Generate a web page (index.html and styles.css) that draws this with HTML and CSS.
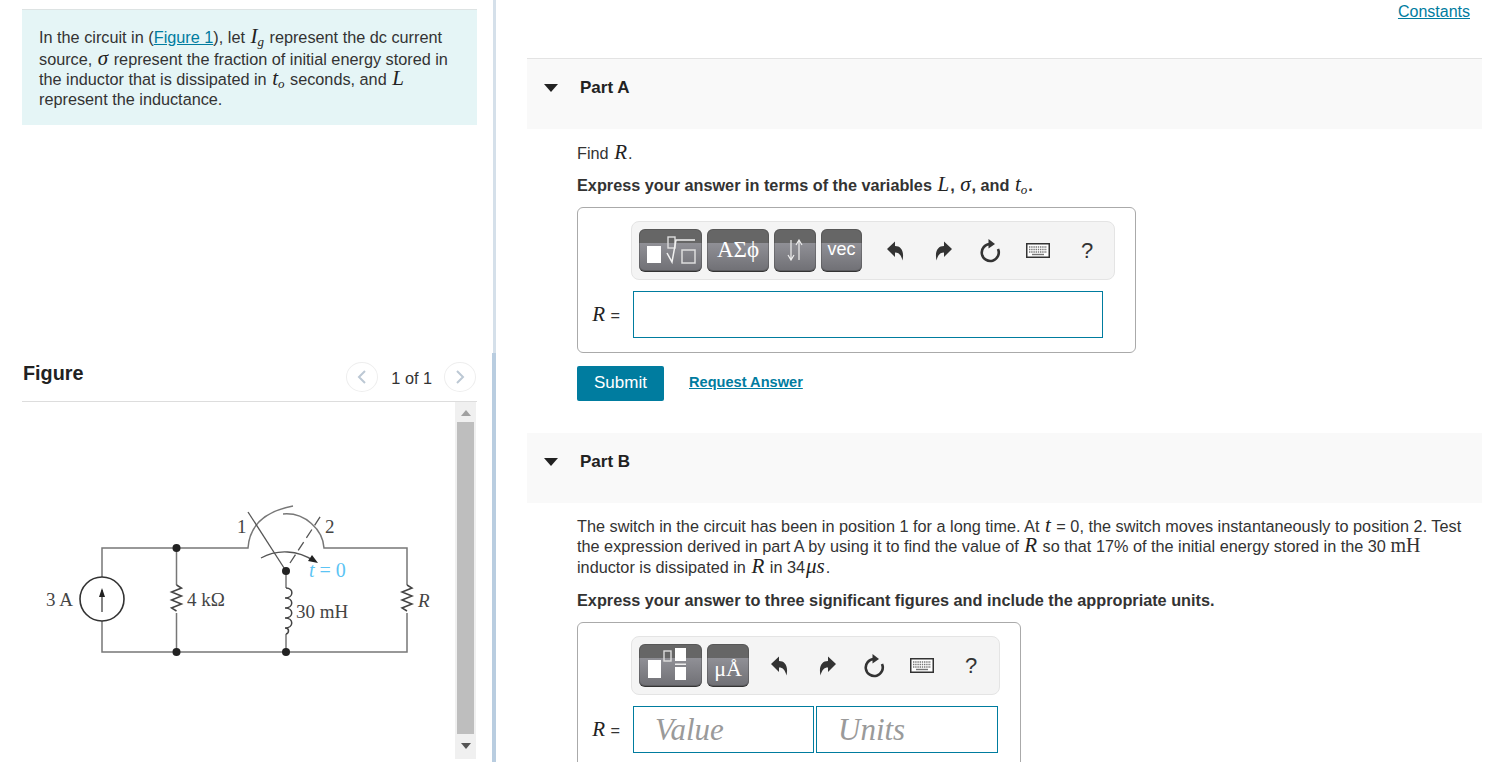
FILE: index.html
```html
<!DOCTYPE html>
<html lang="en">
<head>
    <meta charset="UTF-8">
    <title>Part A</title>
    <link rel="stylesheet" href="styles.css">
</head>
<body>
    <svg class="defs" width="0" height="0">
        <symbol id="i-undo" viewBox="0 0 17 20">
            <path d="M0 8 L8 0.5 V5 C14 5 17.500 10 15.500 19.500 C14 14 12 11.500 8 11.500 V16 Z"/>
        </symbol>
        <symbol id="i-reset" viewBox="0 0 22 24">
            <path d="M11 5 A8.500 8.500 0 1 0 19 10" fill="none" stroke="currentColor" stroke-width="2.600"/>
            <path d="M9.500 0 L16 5 L9.500 9.500 Z"/>
        </symbol>
        <symbol id="i-keys" viewBox="0 0 24 15">
            <rect x="0.750" y="0.750" width="22.500" height="13.500" fill="#fff" stroke="currentColor" stroke-width="1.500"/>
            <path d="M3 4 H21 M3 6.500 H21 M3 9 H21" stroke="#777" stroke-width="1.400" stroke-dasharray="1.400 0.800" fill="none"/>
            <path d="M6 11.500 H18" stroke="#777" stroke-width="1.400" fill="none"/>
        </symbol>
    </svg>

    <aside class="left">
        <div class="intro">
            <p>In the circuit in (<a href="#">Figure 1</a>), let <span class="m big">I<sub>g</sub></span> represent the dc current<br>
            source, <span class="m">σ</span> represent the fraction of initial energy stored in<br>
            the inductor that is dissipated in <span class="m">t<sub>o</sub></span> seconds, and <span class="m">L</span><br>
            represent the inductance.</p>
        </div>

        <div class="fig-head">
            <h3>Figure</h3>
            <div class="pager">
                <span class="circ"><svg width="10" height="16" viewBox="0 0 10 16"><path d="M8 2 L2 8 L8 14" fill="none" stroke="#bcc8d4" stroke-width="2"/></svg></span>
                <span class="count">1 of 1</span>
                <span class="circ"><svg width="10" height="16" viewBox="0 0 10 16"><path d="M2 2 L8 8 L2 14" fill="none" stroke="#bcc8d4" stroke-width="2"/></svg></span>
            </div>
        </div>

        <div class="fig-pane">
            <div class="fig-img">
                <svg class="circuit" width="433" height="358" viewBox="22 402 433 358">
                    <g fill="none" stroke="#777" stroke-width="1.500">
                        <path d="M102 577 V548 H248 C249 533 256 513 293 506"/>
                        <path d="M283 514 C305 512 323 530 324 548 H407 V585"/>
                        <path d="M407 613 V652 H102 V621"/>
                        <path d="M176.500 548 V585 M176.500 613 V652 M286 571 V588 M286 634 V652"/>
                    </g>
                    <g fill="none" stroke="#444" stroke-width="1.500">
                        <path d="M176.500 585 l5 3 l-10 4 l10 4 l-10 4 l10 4 l-10 4 l5 3"/>
                        <path d="M407 585 l5 3 l-10 4 l10 4 l-10 4 l10 4 l-10 4 l5 3"/>
                        <path d="M286 588 c8 0 8 10 -1 10 c9 0 9 10 0 10 c9 0 9 10 0 10 c9 0 9 10 0 10 c5 0 4 5 1 6"/>
                    </g>
                    <g fill="none" stroke="#555" stroke-width="1.300">
                        <path d="M248 512 L286 571"/>
                        <path d="M290 563 L322 514" stroke-dasharray="10 5"/>
                        <path d="M261 558 C277 549 298 550 314 561"/>
                    </g>
                    <circle cx="102" cy="599" r="22" fill="none" stroke="#333" stroke-width="1.600"/>
                    <path d="M102 612 V590" stroke="#333" stroke-width="1.200"/>
                    <path d="M102 588 L105 597 H99 Z" fill="#222"/>
                    <path d="M318 563 L308 561 L312 555 Z" fill="#222"/>
                    <circle cx="176.500" cy="548" r="4" fill="#222"/>
                    <circle cx="176.500" cy="652" r="4" fill="#222"/>
                    <circle cx="286" cy="571" r="4" fill="#222"/>
                    <circle cx="286" cy="652" r="4" fill="#222"/>
                    <g class="ct">
                        <text x="46" y="606">3 A</text>
                        <text x="187" y="606">4 kΩ</text>
                        <text x="237" y="533">1</text>
                        <text x="325" y="533">2</text>
                        <text x="296" y="618">30 mH</text>
                        <text x="418" y="607" font-style="italic">R</text>
                        <text class="t0" x="309" y="577"><tspan font-style="italic">t</tspan> = 0</text>
                    </g>
                </svg>
            </div>
            <div class="scroll">
                <span class="tri up"></span>
                <span class="thumb"></span>
                <span class="tri down"></span>
            </div>
        </div>
    </aside>

    <div class="divider">
        <span class="div-top"></span>
        <span class="div-bot"></span>
    </div>

    <main class="right">
        <div class="const"><a href="#">Constants</a></div>

        <section class="part">
            <div class="part-head"><span class="caret"></span><h4>Part A</h4></div>
            <div class="part-body">
                <p class="find">Find <span class="m">R</span>.</p>
                <p class="ask"><b>Express your answer in terms of the variables <span class="m">L</span>, <span class="m">σ</span>, and <span class="m">t<sub>o</sub></span>.</b></p>
                <div class="answer a-wide">
                    <div class="toolbar t-wide">
                        <div class="btns">
                            <span class="btn b-root">
                                <svg width="52" height="34" viewBox="0 0 52 34"><rect x="2" y="13" width="14" height="17" fill="#fff"/><rect x="23" y="4" width="7" height="11" fill="none" stroke="#ddd" stroke-width="1.400"/><path d="M22 20 L27 29 L31 7 H50" fill="none" stroke="#f0f0f0" stroke-width="1.500"/><rect x="37" y="17" width="13" height="13" fill="none" stroke="#ddd" stroke-width="1.500"/></svg>
                            </span>
                            <span class="btn b-greek">ΑΣϕ</span>
                            <span class="btn b-arrows">
                                <svg width="18" height="22" viewBox="0 0 18 22"><path d="M5 1 V20 M2 16 L5 21 L8 16 M13 21 V2 M10 6 L13 1 L16 6" fill="none" stroke="#eee" stroke-width="1.200"/></svg>
                            </span>
                            <span class="btn b-vec">vec</span>
                        </div>
                        <div class="tools">
                            <svg class="ti" width="17" height="20"><use href="#i-undo"/></svg>
                            <svg class="ti flip" width="17" height="20"><use href="#i-undo"/></svg>
                            <svg class="ti" width="22" height="24"><use href="#i-reset"/></svg>
                            <svg class="ti" width="24" height="15"><use href="#i-keys"/></svg>
                            <span class="help">?</span>
                        </div>
                    </div>
                    <div class="row">
                        <span class="lab"><span class="m">R</span> =</span>
                        <input class="inp i-wide" type="text">
                    </div>
                </div>
                <div class="actions">
                    <button type="button">Submit</button>
                    <a href="#">Request Answer</a>
                </div>
            </div>
        </section>

        <section class="part part-b">
            <div class="part-head"><span class="caret"></span><h4>Part B</h4></div>
            <div class="part-body">
                <p class="find text-b">The switch in the circuit has been in position 1 for a long time. At <span class="m">t</span> = 0, the switch moves instantaneously to position 2. Test<br>
                the expression derived in part A by using it to find the value of <span class="m">R</span> so that 17% of the initial energy stored in the 30 <span class="up-m">mH</span><br>
                inductor is dissipated in <span class="m">R</span> in 34<span class="m">μs</span>.</p>
                <p class="ask"><b>Express your answer to three significant figures and include the appropriate units.</b></p>
                <div class="answer a-narrow">
                    <div class="toolbar t-narrow">
                        <div class="btns">
                            <span class="btn b-root">
                                <svg width="52" height="36" viewBox="0 0 52 36"><rect x="3" y="13" width="13" height="18" fill="#fff"/><rect x="19" y="4" width="7" height="10" fill="none" stroke="#ddd" stroke-width="1.400"/><rect x="30" y="1" width="11" height="13" fill="#fff"/><rect x="30" y="16.500" width="11" height="1.500" fill="#eee"/><rect x="30" y="20" width="11" height="13" fill="#fff"/></svg>
                            </span>
                            <span class="btn b-units">μÅ</span>
                        </div>
                        <div class="tools">
                            <svg class="ti" width="17" height="20"><use href="#i-undo"/></svg>
                            <svg class="ti flip" width="17" height="20"><use href="#i-undo"/></svg>
                            <svg class="ti" width="22" height="24"><use href="#i-reset"/></svg>
                            <svg class="ti" width="24" height="15"><use href="#i-keys"/></svg>
                            <span class="help">?</span>
                        </div>
                    </div>
                    <div class="row">
                        <span class="lab"><span class="m">R</span> =</span>
                        <input class="inp i-val" type="text" placeholder="Value">
                        <input class="inp i-val i-unit" type="text" placeholder="Units">
                    </div>
                </div>
            </div>
        </section>
    </main>
</body>
</html>
```

FILE: styles.css
```css
html, body {
    margin: 0;
    height: 762px;
    overflow: hidden;
}
body {
    display: flex;
    font-family: "Liberation Sans", Arial, sans-serif;
    font-size: 16.25px;
    line-height: 20px;
    color: #333;
    background-color: #fff;
}
p {
    margin: 0;
}
a {
    color: #007c9f;
}
.defs {
    position: absolute;
}
.m {
    margin: 0 1px;
    font-family: "Liberation Serif", serif;
    font-style: italic;
    font-weight: normal;
    font-size: 21px;
    line-height: 0;
    color: #222;
}
.m.big {
    margin: 0 1px;
    line-height: 25px;
}
.m sub {
    font-size: 13px;
    line-height: 0;
    vertical-align: -3px;
}
.up-m {
    font-family: "Liberation Serif", serif;
    font-size: 20px;
    line-height: 0;
}

/* left column */
.left {
    width: 455px;
    padding: 9px 15px 0 22px;
    flex-shrink: 0;
}
.intro {
    box-sizing: border-box;
    height: 116px;
    padding: 14px 17px 0;
    background-color: #e5f5f6;
    border-top: 1px solid #dde3e3;
}
.fig-head {
    display: flex;
    justify-content: space-between;
    align-items: center;
    height: 41px;
    margin-top: 236px;
    border-bottom: 1px solid #ddd;
    box-sizing: border-box;
}
.fig-head h3 {
    margin: 0 0 16px 1px;
    font-size: 19.800px;
    color: #222;
}
.pager {
    display: flex;
    align-items: center;
    margin: 0 1px 6px 0;
}
.circ {
    display: flex;
    align-items: center;
    justify-content: center;
    box-sizing: border-box;
    width: 32px;
    height: 30px;
    margin-bottom: 3px;
    border: 1px solid #eee;
    border-radius: 50%;
}
.count {
    margin: 0 12px 0 13px;
}
.fig-pane {
    display: flex;
    height: 357px;
}
.fig-img {
    width: 433px;
}
.circuit {
    display: block;
}
.ct text {
    font-family: "Liberation Serif", serif;
    font-size: 19px;
    fill: #444;
}
.ct .t0 {
    font-size: 20px;
    fill: #5cc4f4;
}
.scroll {
    display: flex;
    flex-direction: column;
    align-items: center;
    width: 21px;
    margin-right: 1px;
    background-color: #f0f0f0;
}
.thumb {
    width: 17px;
    height: 312px;
    margin: 6px 0 9px;
    background-color: #bebebe;
}
.tri {
    width: 0;
    height: 0;
    border-left: 5px solid transparent;
    border-right: 5px solid transparent;
}
.tri.up {
    margin-top: 8px;
    border-bottom: 6px solid #a0a0a0;
}
.tri.down {
    border-top: 6px solid #555;
}

.divider {
    display: flex;
    flex-direction: column;
    align-items: flex-end;
    width: 4px;
    flex-shrink: 0;
}
.div-top {
    width: 3px;
    height: 353px;
    background-color: #d5e0ea;
}
.div-bot {
    width: 4px;
    flex: 1;
    background-color: #b9cde0;
}

/* right column */
.right {
    flex: 1;
    height: 762px;
    padding: 0 18px 0 31px;
    overflow: hidden;
}
.const {
    height: 58px;
    padding: 2px 12px 0 0;
    box-sizing: border-box;
    text-align: right;
    font-size: 16px;
}
.part-head {
    display: flex;
    align-items: center;
    box-sizing: border-box;
    height: 71px;
    padding: 0 0 13px 17px;
    background-color: #f9f9f9;
    border-top: 1px solid #e3e3e3;
}
.part-b .part-head {
    height: 70px;
    padding-bottom: 12px;
    border-top: 0;
}
.part-head h4 {
    margin: 0 0 0 22px;
    font-size: 17px;
    color: #222;
}
.caret {
    width: 0;
    height: 0;
    border-left: 7px solid transparent;
    border-right: 7px solid transparent;
    border-top: 8px solid #222;
}
.part-body {
    padding: 14px 0 0 50px;
}
.part-b .part-body {
    padding-top: 13px;
}
.ask {
    margin-top: 12px;
}
.part-b .ask {
    margin-top: 13px;
}
.answer {
    box-sizing: border-box;
    margin-top: 12px;
    padding: 13px 0 0 0;
    border: 1px solid #aaa;
    border-radius: 6px;
}
.a-wide {
    width: 559px;
    height: 146px;
}
.a-narrow {
    width: 444px;
    height: 141px;
    border-radius: 6px 6px 0 0;
}
.toolbar {
    display: flex;
    align-items: center;
    box-sizing: border-box;
    height: 59px;
    margin-left: 53px;
    padding-left: 7px;
    background-color: #f4f4f4;
    border: 1px solid #e4e4e4;
    border-radius: 8px;
}
.t-wide {
    width: 484px;
}
.t-narrow {
    width: 369px;
}
.btns {
    display: flex;
    gap: 5px;
}
.btn {
    display: flex;
    align-items: center;
    justify-content: center;
    box-sizing: border-box;
    height: 43px;
    color: #fff;
    border-radius: 6px;
    border-bottom: 1px solid #333;
    box-shadow: inset 0 0 0 1px rgba(60, 60, 60, 0.35);
    background: linear-gradient(#666 0, #666 14px, #909096 14px, #707075 100%);
}
.b-root {
    width: 63px;
}
.b-greek {
    width: 62px;
    font-family: "Liberation Serif", serif;
    font-size: 23px;
}
.b-arrows {
    width: 42px;
}
.b-vec {
    width: 41px;
    padding-bottom: 2px;
    font-size: 18px;
}
.b-units {
    width: 42px;
    padding-top: 8px;
    font-family: "Liberation Serif", serif;
    font-size: 22px;
}
.tools {
    display: flex;
    align-items: center;
}
.ti {
    fill: #333;
    color: #333;
}
.flip {
    transform: scaleX(-1);
}
.tools > *:nth-child(1) { margin-left: 25px; }
.tools > *:nth-child(2) { margin-left: 31px; }
.tools > *:nth-child(3) { margin-left: 27px; }
.tools > *:nth-child(4) { margin-left: 25px; }
.tools > *:nth-child(5) { margin-left: 31px; }
.t-narrow .tools > *:nth-child(1) { margin-left: 22px; }
.help {
    font-size: 22px;
    color: #333;
}
.row {
    display: flex;
    align-items: center;
    margin-top: 11px;
}
.lab {
    width: 55px;
    padding-right: 13px;
    box-sizing: border-box;
    text-align: right;
}
.inp {
    box-sizing: border-box;
    height: 47px;
    border: 1px solid #007c9f;
    background: #fff;
    outline: none;
}
.i-wide {
    width: 470px;
}
.i-val {
    width: 181px;
    padding-left: 21px;
    font-family: "Liberation Serif", serif;
    font-style: italic;
    font-size: 31px;
}
.i-unit {
    width: 182px;
    margin-left: 2px;
}
.inp::placeholder {
    color: #9a9a9a;
    opacity: 1;
}
.actions {
    display: flex;
    align-items: center;
    margin-top: 13px;
}
.actions button {
    width: 87px;
    height: 35px;
    padding: 0 0 2px;
    border: none;
    border-radius: 2px;
    background-color: #007c9f;
    color: #fff;
    font: inherit;
    font-size: 17px;
}
.actions a {
    margin: 0 0 3px 25px;
    font-size: 14.600px;
    font-weight: bold;
}
.part-b {
    margin-top: 32px;
}
.text-b {
    width: 900px;
    line-height: 20.400px;
}
```
